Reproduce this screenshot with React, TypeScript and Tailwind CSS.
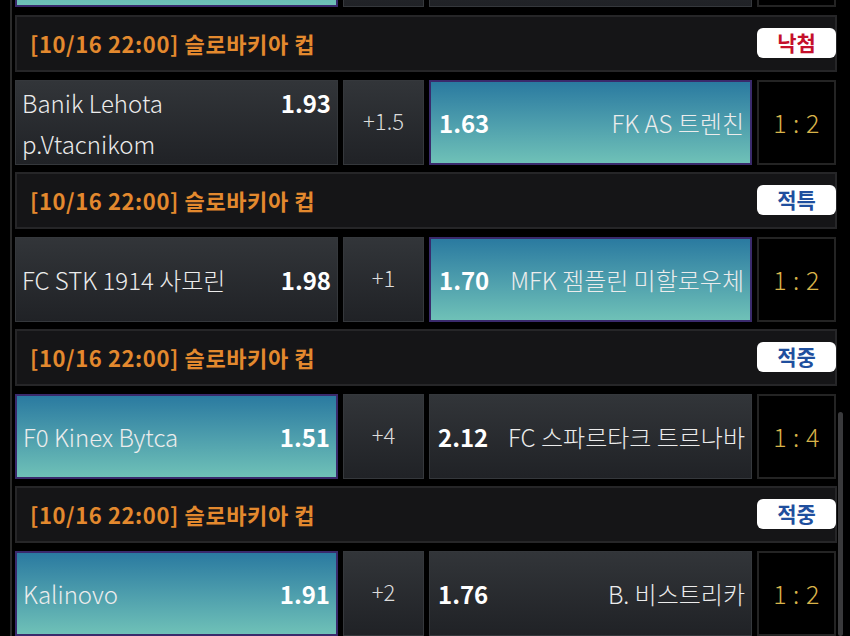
import React from 'react';

type Side = 'teal' | 'gray';

interface Match {
  time: string;
  league: string;
  badge?: { label: string; tone: 'red' | 'blue' };
  home: string;
  homeOdds: string;
  away: string;
  awayOdds: string;
  handicap: string;
  score: string;
  pick: 'home' | 'away';
}

const matches: Match[] = [
  {
    time: '10/16 22:00',
    league: '슬로바키아 컵',
    badge: { label: '낙첨', tone: 'red' },
    home: 'Banik Lehota p.Vtacnikom',
    homeOdds: '1.93',
    away: 'FK AS 트렌친',
    awayOdds: '1.63',
    handicap: '+1.5',
    score: '1 : 2',
    pick: 'away',
  },
  {
    time: '10/16 22:00',
    league: '슬로바키아 컵',
    badge: { label: '적특', tone: 'blue' },
    home: 'FC STK 1914 사모린',
    homeOdds: '1.98',
    away: 'MFK 젬플린 미할로우체',
    awayOdds: '1.70',
    handicap: '+1',
    score: '1 : 2',
    pick: 'away',
  },
  {
    time: '10/16 22:00',
    league: '슬로바키아 컵',
    badge: { label: '적중', tone: 'blue' },
    home: 'F0 Kinex Bytca',
    homeOdds: '1.51',
    away: 'FC 스파르타크 트르나바',
    awayOdds: '2.12',
    handicap: '+4',
    score: '1 : 4',
    pick: 'home',
  },
  {
    time: '10/16 22:00',
    league: '슬로바키아 컵',
    badge: { label: '적중', tone: 'blue' },
    home: 'Kalinovo',
    homeOdds: '1.91',
    away: 'B. 비스트리카',
    awayOdds: '1.76',
    handicap: '+2',
    score: '1 : 2',
    pick: 'home',
  },
];

const cellBg = (side: Side) =>
  side === 'teal'
    ? 'bg-gradient-to-b from-[#2a7aa0] to-[#6fc1b7] border-2 border-[#3a2a6c]'
    : 'bg-gradient-to-b from-[#323539] to-[#202226] border border-[#35383c]';

const MatchHeader = ({ m }: { m: Match }) => (
  <div className="h-[57px] flex items-center justify-between bg-[#151517] border-2 border-[#262628] pl-[13px] pr-0">
    <span className="text-[22px] font-bold text-[#e3892e] tracking-[0.6px]">
      [{m.time}] {m.league}
    </span>
    {m.badge && (
      <span
        className={`w-[79px] h-[30px] -mr-px mb-[1px] flex items-center justify-center rounded-[6px] bg-white text-[21px] font-bold ${
          m.badge.tone === 'red' ? 'text-[#c5102b]' : 'text-[#1f4f9e]'
        }`}
      >
        {m.badge.label}
      </span>
    )}
  </div>
);

const MatchRow = ({ m }: { m: Match }) => {
  const homeSide: Side = m.pick === 'home' ? 'teal' : 'gray';
  const awaySide: Side = m.pick === 'away' ? 'teal' : 'gray';
  return (
    <div className="h-[85px] grid grid-cols-[323px_81px_323px_79px] gap-[5px]">
      <div className={`flex items-center pl-[6px] pr-[6px] ${cellBg(homeSide)}`}>
        <div className="flex items-baseline justify-between w-full gap-3">
          <span className="text-[24px] font-light leading-[41px] text-[#ececec] max-w-[220px]">{m.home}</span>
          <span className="text-[24px] leading-[41px] font-semibold text-white">{m.homeOdds}</span>
        </div>
      </div>
      <div className={`flex items-center justify-center pb-[5px] ${cellBg('gray')}`}>
        <span className="text-[22px] font-light text-[#dcdcdc]">{m.handicap}</span>
      </div>
      <div className={`flex items-center justify-between pl-[8px] pr-[6px] ${cellBg(awaySide)}`}>
        <span className="text-[24px] font-semibold text-white">{m.awayOdds}</span>
        <span className="text-[24px] font-light text-[#ececec]">{m.away}</span>
      </div>
      <div className="flex items-center justify-center bg-black border-2 border-[#242424]">
        <span className="text-[25px] font-light text-[#d8b34a] tracking-[0.5px]">{m.score}</span>
      </div>
    </div>
  );
};

export default function App() {
  return (
    <div className="relative w-[850px] h-[636px] overflow-hidden bg-black font-['Noto_Sans_CJK_KR','Noto_Sans',sans-serif]">
      <div className="absolute left-[10px] top-0 bottom-0 w-[2px] bg-[#2a2a2a]" />
      <div className="absolute left-[838px] top-[412px] bottom-0 w-[5px] rounded-full bg-[#3a3a3c]" />
      <div className="ml-[15px] w-[822px] flex flex-col">
        <div className="-mt-[78px] h-[85px] grid grid-cols-[323px_81px_323px_79px] gap-[5px]">
          <div className={cellBg('teal')} />
          <div className={cellBg('gray')} />
          <div className={cellBg('gray')} />
          <div className="bg-black border-2 border-[#242424]" />
        </div>
        {matches.map((m, i) => (
          <div key={i} className={`flex flex-col ${i === 0 ? 'mt-[8px]' : 'mt-[7px]'}`}>
            <MatchHeader m={m} />
            <div className="mt-[8px]">
              <MatchRow m={m} />
            </div>
          </div>
        ))}
      </div>
    </div>
  );
}
